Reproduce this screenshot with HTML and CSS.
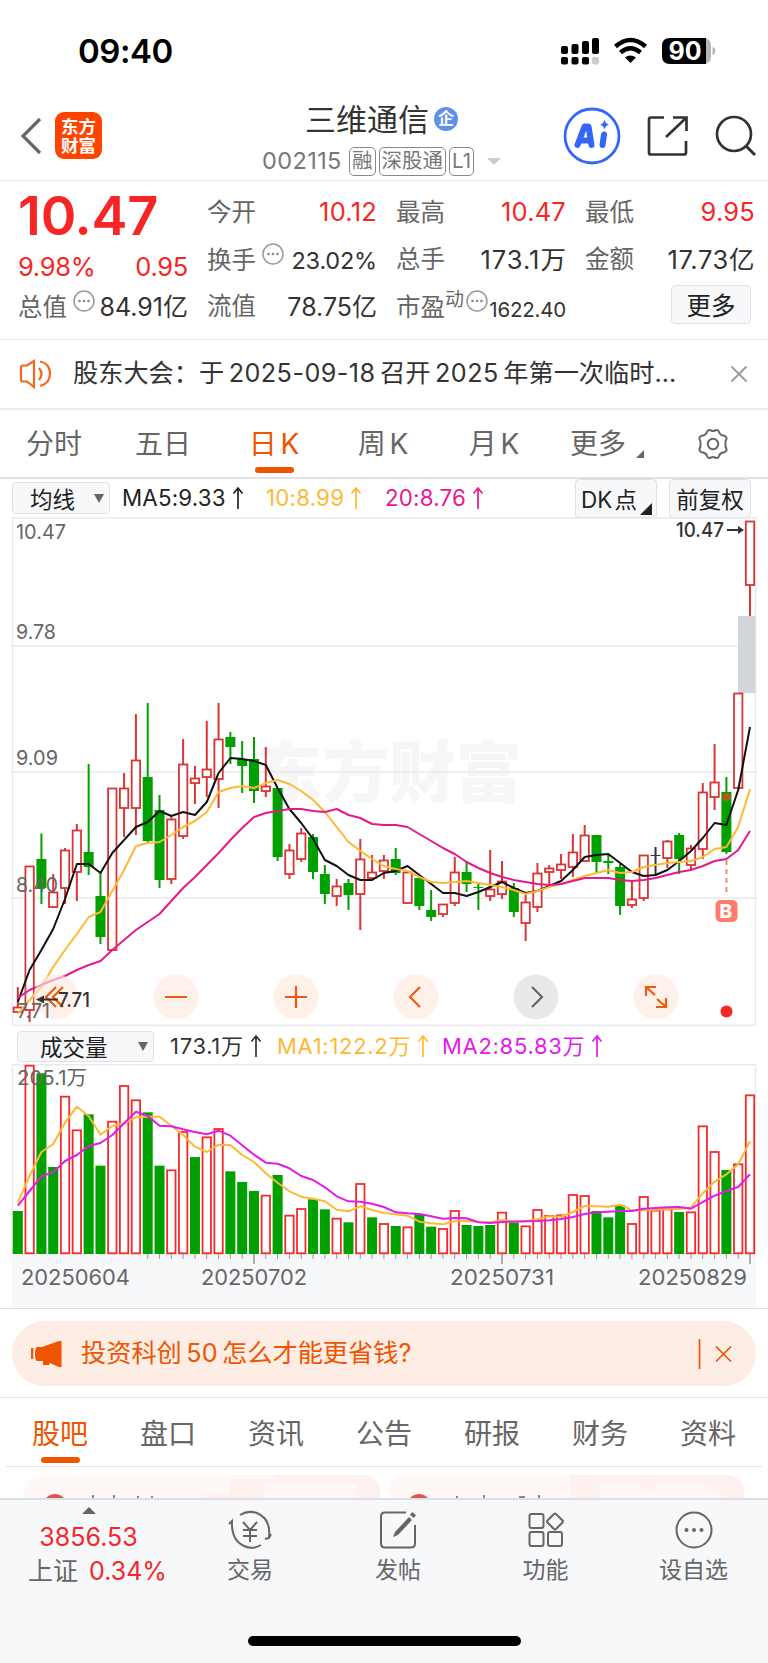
FILE: index.html
```html
<!DOCTYPE html>
<html lang="zh-CN">
<head>
    <meta charset="UTF-8">
    <meta name="viewport" content="width=device-width, initial-scale=1.0">
    <title>三维通信 002115</title>
    <link rel="stylesheet" href="styles.css">
</head>
<body>
    <svg class="defs" width="0" height="0">
        <symbol id="up" viewBox="0 0 12 24"><path d="M6 23V2M1.500 7.500L6 2l4.500 5.500" fill="none" stroke="currentColor" stroke-width="1.700"/></symbol>
        <symbol id="dots" viewBox="0 0 22 22"><circle cx="11" cy="11" r="10" fill="none" stroke="#999" stroke-width="1.500"/><g fill="#888"><circle cx="6.500" cy="11" r="1.300"/><circle cx="11" cy="11" r="1.300"/><circle cx="15.500" cy="11" r="1.300"/></g></symbol>
    </svg>

    <div class="status">
        <span class="time">09:40</span>
        <svg width="156" height="30" viewBox="0 0 156 30">
            <g>
                <rect x="1" y="10" width="7" height="8" rx="2"/><rect x="11.500" y="8" width="7" height="10" rx="2"/><rect x="22" y="5" width="7" height="13" rx="2"/><rect x="32" y="2" width="7" height="16" rx="2"/>
                <rect x="1" y="21" width="7" height="7.500" rx="2"/><rect x="11.500" y="21" width="7" height="7.500" rx="2"/><rect x="22" y="21" width="7" height="7.500" rx="2"/><rect x="32" y="21" width="7" height="7.500" rx="2" fill="#ccc"/>
            </g>
            <path d="M55.500 10.500Q70.500-2.500 85.500 10.500M60.500 16.500Q70.500 8 80.500 16.500" fill="none" stroke="#000" stroke-width="4.500"/>
            <path d="M65 21.500Q70.500 17.500 76 21.500L70.500 27z"/>
            <path d="M110 2h33q8 0 8 8v10q0 8-8 8h-33z" fill="#b5b5b5"/><path d="M110 2h36v26h-36q-8 0-8-8V10q0-8 8-8z"/>
            <path d="M152.500 11q3 1 3 4t-3 4z" fill="#b5b5b5"/>
            <text x="125" y="24" class="bat">90</text>
        </svg>
    </div>

    <div class="header">
        <svg class="back" width="22" height="38" viewBox="0 0 22 38"><path d="M20 2L3 19l17 17" fill="none" stroke="#666" stroke-width="3.200"/></svg>
        <div class="logo">东方<br>财富</div>
        <div class="stock">
            <div class="name">三维通信<span class="qi">企</span></div>
            <div class="code"><span class="num">002115</span><i>融</i><i>深股通</i><i>L1</i><b class="tri"></b></div>
        </div>
        <div class="tools">
            <svg width="58" height="58" viewBox="0 0 58 58"><circle cx="29" cy="29" r="27" fill="#fff" stroke="#3566fb" stroke-width="2.800"/><path d="M14.500 38l7-18.500h4l3 18.500M18 33.500h9M41 27.500l-1.500 10.500" fill="none" stroke="#3566fb" stroke-width="6" stroke-linejoin="round" stroke-linecap="round"/><path d="M41.500 12.500q1 4.500 4.500 5-3.500 1-4.500 5-1-4-4.500-5 3.500-.5 4.500-5z" fill="#3566fb"/></svg>
            <svg width="42" height="42" viewBox="0 0 42 42"><path d="M17 2.500H4q-2 0-2 2v33q0 2 2 2h33q2 0 2-2V26M26 2.500h13.500V16M39 3L19 22" fill="none" stroke="#333" stroke-width="2.700"/></svg>
            <svg width="42" height="42" viewBox="0 0 42 42"><circle cx="19" cy="19" r="17" fill="none" stroke="#333" stroke-width="2.700"/><path d="M31 31l9 9" stroke="#333" stroke-width="3"/></svg>
        </div>
    </div>

    <div class="quote">
        <div class="price">10.47</div>
        <div class="cell r1 c2"><span>今开</span><em class="red">10.12</em></div>
        <div class="cell r1 c3"><span>最高</span><em class="red">10.47</em></div>
        <div class="cell r1 c4"><span>最低</span><em class="red">9.95</em></div>
        <div class="cell r2 c1 change"><em class="red">9.98%</em><em class="red">0.95</em></div>
        <div class="cell r2 c2"><span>换手<svg class="info"><use href="#dots"/></svg></span><em class="mid">23.02%</em></div>
        <div class="cell r2 c3"><span>总手</span><em class="wide">173.1万</em></div>
        <div class="cell r2 c4"><span>金额</span><em>17.73亿</em></div>
        <div class="cell r3 c1"><span>总值<svg class="info"><use href="#dots"/></svg></span><em class="cap">84.91亿</em></div>
        <div class="cell r3 c2"><span>流值</span><em class="cap">78.75亿</em></div>
        <div class="cell r3 c3"><span>市盈<sup>动</sup><svg class="info pe"><use href="#dots"/></svg></span><em class="small">1622.40</em></div>
        <button class="more">更多</button>
    </div>

    <div class="notice">
        <svg width="34" height="30" viewBox="0 0 34 30"><path d="M2 8.500q0-2 2-2h4L15 2v26L8 22.500H4q-2 0-2-2zM20 9q5 6 0 12M21 2.500q10 2 10 12t-10 12.500" fill="none" stroke="#f06a1a" stroke-width="2.200"/></svg>
        <p>股东大会：于<span> 2025-09-18 </span>召开<span> 2025 </span>年第一次临时...</p>
        <svg width="18" height="18" viewBox="0 0 18 18"><path d="M1.500 1.500l15 15M16.500 1.500l-15 15" stroke="#999" stroke-width="1.800"/></svg>
    </div>

    <div class="periods">
        <a>分时</a><a>五日</a><a class="on">日 K</a><a>周 K</a><a>月 K</a><a class="corner">更多</a>
        <a class="gear"><svg width="34" height="32" viewBox="0 0 34 32"><path d="M11 4Q12 1 15 2.500q2 1 4 0Q22 1 23 4q1 3 4 3.500 4 .5 3.500 3.500-1.500 2.500-1 5-.5 2.500 1 5 .5 3-3.500 3.500-3 .5-4 3.500-1 3-4 1.500-2-1-4 0Q12 31 11 28q-1-3-4-3.500-4-.5-3.500-3.500 1.500-2.500 1-5 .5-2.500-1-5Q3 8 7 7.500 10 7 11 4z" fill="none" stroke="#666" stroke-width="2"/><circle cx="17" cy="16" r="5.200" fill="none" stroke="#666" stroke-width="2"/></svg></a>
    </div>

    <div class="bar">
        <button class="pick">均线<b></b></button>
        <span class="ma5">MA5:9.33<svg><use href="#up"/></svg></span>
        <span class="ma10">10:8.99<svg><use href="#up"/></svg></span>
        <span class="ma20">20:8.76<svg><use href="#up"/></svg></span>
        <button class="dk">DK 点</button>
        <button class="fq">前复权</button>
    </div>
    <svg id="kline" class="kline" viewBox="0 517 768 509"></svg>

    <div class="bar vol">
        <button class="pick">成交量<b></b></button>
        <span class="v0">173.1万<svg><use href="#up"/></svg></span>
        <span class="v1">MA1:122.2万<svg><use href="#up"/></svg></span>
        <span class="v2">MA2:85.83万<svg><use href="#up"/></svg></span>
    </div>
    <svg id="volume" class="volume" viewBox="0 1064 768 244"></svg>

    <div class="promo">
        <div class="pill">
            <svg width="32" height="28" viewBox="0 0 32 28"><path d="M1 8v11" stroke="#ee5500" stroke-width="2.500"/><path d="M6 7h5L28 1h2.500v26H28l-9-4-1 2h-6v-4H6q-2-1-2-7t2-7z" fill="#ee5500"/></svg>
            <p>投资科创 50 怎么才能更省钱?</p>
            <svg width="36" height="32" viewBox="0 0 36 32"><path d="M2.500 1v30M19 8.500l15 15M34 8.500l-15 15" stroke="#ee5500" stroke-width="1.700"/></svg>
        </div>
    </div>

    <div class="sections">
        <a class="on">股吧</a><a>盘口</a><a>资讯</a><a>公告</a><a>研报</a><a>财务</a><a>资料</a>
    </div>

    <div class="cards">
        <svg class="card" viewBox="0 0 356 23"><path d="M178 18h28V4h45V0h105v23H178z" fill="#fff1ef"/><path d="M241 9h91v14h-91z" fill="#fff7f5"/><circle cx="31" cy="31" r="12" fill="#dd5550"/><path d="M69 20v3M90 20v3M114 21v2M128 21v2" stroke="#888" stroke-width="2"/></svg>
        <svg class="card" viewBox="0 0 356 23"><path d="M182 0h174v23H182z" fill="#fff1ef"/><path d="M213 7h33l14 9 18-8q40-5 60 15H213z" fill="#fff7f5"/><circle cx="31" cy="31" r="12" fill="#dd5550"/><path d="M69 21v2M96 20v3M131 22h6M151 20v3" stroke="#888" stroke-width="2"/></svg>
    </div>

    <div class="dock">
        <div class="index"><b></b><strong>3856.53</strong><p>上证 <em>0.34%</em></p></div>
        <div class="item">
            <svg width="44" height="40" viewBox="0 0 44 40"><g fill="none" stroke="#666" stroke-width="2"><path d="M12 5q8-5 17-2 14 6 12 24M33 35q-8 5-17 1Q3 30 4 11L1 14M37 29l4-1 2-4M15 12l7 8 7-8M22 20v12M15 20h14M15 26h14"/></g></svg>
            <span>交易</span>
        </div>
        <div class="item">
            <svg width="38" height="40" viewBox="0 0 38 40"><path d="M27 2.500H6q-4 0-4 4v27q0 4 4 4h26q4 0 4-4V15" fill="none" stroke="#666" stroke-width="2"/><path d="M30 7l3 3-14 15-5 2 2-5zM33 2l4 3-2 3-4-3z" fill="#666"/></svg>
            <span>发帖</span>
        </div>
        <div class="item">
            <svg width="36" height="36" viewBox="0 0 36 36"><g fill="none" stroke="#666" stroke-width="2"><rect x="1.500" y="2" width="14" height="14" rx="2"/><rect x="1.500" y="20" width="14" height="14" rx="2"/><rect x="20" y="20" width="14" height="14" rx="2"/><path d="M26 2q1-1 2 0l6.500 6.500q1 1 0 2L28 17q-1 1-2 0l-6.500-6.500q-1-1 0-2z"/></g></svg>
            <span>功能</span>
        </div>
        <div class="item">
            <svg width="38" height="38" viewBox="0 0 38 38"><circle cx="19" cy="19" r="17.500" fill="none" stroke="#666" stroke-width="2"/><g fill="#666"><circle cx="11.500" cy="19" r="2"/><circle cx="19" cy="19" r="2"/><circle cx="26.500" cy="19" r="2"/></g></svg>
            <span>设自选</span>
        </div>
        <div class="home"></div>
    </div>
    <script src="chart.js"></script>
</body>
</html>
```
FILE: styles.css
```css
* {
    box-sizing: border-box;
}
body {
    margin: 0;
    width: 768px;
    height: 1663px;
    overflow: hidden;
    background: #fff;
    color: #333;
    font-family: Inter, "Noto Sans CJK SC", sans-serif;
    font-size: 25px;
    line-height: 1;
}
p {
    margin: 0;
}
em, i {
    font-style: normal;
}
button {
    font-family: inherit;
    padding: 0;
    color: #222;
    background: #f7f8fa;
    border: 1.5px solid #dfe1e6;
    border-radius: 4px;
}
.defs {
    position: absolute;
}
.status {
    display: flex;
    justify-content: space-between;
    align-items: center;
    height: 100px;
    padding: 2px 52px 0 78px;
    color: #000;
}
.time {
    padding-top: 1px;
    font-size: 33px;
    font-weight: 600;
    letter-spacing: -0.5px;
}
.bat {
    font-size: 25px;
    font-weight: 700;
    fill: #fff;
    text-anchor: middle;
}

/* header */
.header {
    display: grid;
    grid-template-columns: 35px 143px 333px 1fr;
    height: 81px;
    padding-left: 20px;
    border-bottom: 1.5px solid #e8e8e8;
}
.back {
    margin-top: 17px;
}
.logo {
    width: 47px;
    height: 47px;
    margin-top: 12px;
    padding-top: 5px;
    border-radius: 9px;
    background: #ff4400;
    color: #fff;
    font-size: 17.500px;
    font-weight: 700;
    line-height: 19px;
    text-align: center;
}
.stock {
    padding-left: 64px;
}
.name {
    display: flex;
    align-items: center;
    height: 38px;
    padding-left: 43px;
    font-size: 31px;
}
.qi {
    width: 24px;
    height: 24px;
    margin-left: 5px;
    border-radius: 50%;
    background: #5f90ea;
    color: #fff;
    font-size: 16px;
    font-weight: 700;
    line-height: 23px;
    text-align: center;
}
.code {
    display: flex;
    align-items: center;
    height: 46px;
    color: #777;
    font-size: 23.500px;
}
.code .num {
    width: 87px;
    letter-spacing: 0.4px;
}
.code i {
    height: 29px;
    margin-right: 3px;
    padding: 0 2px;
    border: 1.5px solid #888;
    border-radius: 5px;
    font-size: 20.500px;
    line-height: 26px;
    white-space: nowrap;
}
.tri {
    margin-left: 10px;
    border: 7px solid transparent;
    border-top-color: #ccc;
    border-bottom: 0;
}
.tools {
    display: flex;
    align-items: center;
    gap: 26px;
    height: 72px;
    margin-left: 32px;
}

/* quote */
.quote {
    display: grid;
    grid-template-columns: repeat(4, 170px);
    column-gap: 19px;
    grid-template-rows: 48px 47px 47px;
    height: 159px;
    padding: 7px 0 0 18px;
    border-bottom: 1.5px solid #e5e5e5;
}
.price {
    grid-area: 1 / 1;
    padding-top: 1px;
    color: #f72626;
    font-size: 54px;
    font-weight: 600;
    letter-spacing: -0.2px;
}
.cell {
    display: flex;
    justify-content: space-between;
    align-items: center;
    white-space: nowrap;
}
.cell span {
    color: #666;
    font-size: 24.500px;
}
.cell em {
    font-size: 25.500px;
    letter-spacing: 0.6px;
}
.cell .red {
    color: #f72626;
    letter-spacing: 0.2px;
}
.cell .mid {
    font-size: 23.500px;
    padding-top: 2px;
    letter-spacing: -0.2px;
}
.cell .cap {
    font-size: 25px;
    padding-top: 2px;
    letter-spacing: 0;
}
.cell .wide {
    letter-spacing: 1px;
    margin-right: -1px;
}
.cell .small {
    font-size: 20.500px;
    padding-top: 7px;
    letter-spacing: -0.2px;
}
.c1 { grid-column: 1; }
.c2 { grid-column: 2; }
.c3 { grid-column: 3; }
.c4 { grid-column: 4; }
.r1 { grid-row: 1; }
.r2 { grid-row: 2; }
.r3 { grid-row: 3; }
.change {
    padding-top: 14px;
}
.change .red {
    letter-spacing: -0.3px;
}
.info {
    width: 22px;
    height: 22px;
    margin: -4px 0 0 6px;
    vertical-align: 4px;
}
.info.pe {
    margin-left: 2px;
}
sup {
    font-size: 19px;
    line-height: 0;
    vertical-align: 10px;
}
.more {
    grid-area: 3 / 4;
    width: 80px;
    height: 39px;
    margin: -4px 0 0 86px;
    align-self: center;
    font-size: 24.500px;
}

.notice {
    display: flex;
    align-items: center;
    height: 70px;
    padding: 0 20px 1px 19px;
    border-bottom: 2px solid #ebebeb;
}
.notice p {
    flex: 1;
    margin-left: 20px;
    font-size: 25.200px;
    white-space: nowrap;
}
.notice p span {
    letter-spacing: 0.45px;
    word-spacing: -3px;
}

/* period tabs */
.periods {
    display: grid;
    grid-template-columns: 108px 110px 112px 106px 116px 92px 124px;
    height: 69px;
    padding-top: 1px;
    border-bottom: 2px solid #e0e1e6;
    word-spacing: -4px;
}
.periods a, .sections a {
    position: relative;
    display: flex;
    justify-content: center;
    align-items: center;
    color: #666;
    font-size: 28px;
}
.periods .gear {
    padding-left: 14px;
}
.periods .on, .sections .on {
    color: #ee5500;
}
.on::after {
    content: "";
    position: absolute;
    bottom: 4px;
    width: 39px;
    height: 6px;
    border-radius: 3px;
    background: #ee5500;
}
.corner::after, .dk::after {
    content: "";
    position: absolute;
    right: 0;
    bottom: 19px;
    border: 4px solid #666;
    border-top-color: transparent;
    border-left-color: transparent;
}

/* indicator rows */
.bar {
    display: flex;
    align-items: center;
    height: 38px;
    padding-left: 12px;
    font-size: 22.300px;
    letter-spacing: 0.2px;
}
.bar button {
    font-size: 22.500px;
}
.bar span {
    display: flex;
    align-items: center;
    white-space: nowrap;
}
.bar svg {
    width: 12px;
    height: 24px;
    margin-left: 6px;
}
.pick {
    display: flex;
    justify-content: space-between;
    align-items: center;
    width: 98px;
    height: 32px;
    margin-right: 12px;
    padding: 0 5px 0 17px;
}
.pick b {
    border: 5px solid transparent;
    border-top: 9px solid #666;
    border-bottom: 0;
}
.ma5 { width: 144px; color: #222; }
.ma10 { width: 119px; color: #fdb933; }
.ma20 { width: 190px; color: #e8168f; }
.bar .dk {
    position: relative;
    width: 82px;
    height: 39px;
    padding-right: 14px;
    word-spacing: -4px;
}
.dk::after {
    right: 4px;
    bottom: 2px;
    border: 6px solid #222;
    border-top-color: transparent;
    border-left-color: transparent;
}
.bar .fq {
    width: 82px;
    height: 39px;
    margin-left: 12px;
}
.kline, .volume {
    display: block;
    width: 768px;
    height: 509px;
}
.volume {
    height: 245px;
    border-bottom: 1px solid #e0e0e4;
}
.vol {
    padding: 2px 0 0 17px;
    font-size: 22px;
    letter-spacing: 0.7px;
}
.vol .pick {
    width: 137px;
    height: 31px;
    margin-right: 16px;
    padding-left: 22px;
}
.v0 { width: 107px; }
.v1 { width: 165px; color: #fdb933; }
.v2 { color: #e21ce8; }

.label {
    font-size: 20px;
    fill: #666;
}
.date {
    font-size: 21.500px;
    fill: #666;
}
.mark {
    font-size: 20px;
    font-weight: 500;
    fill: #333;
}
.water {
    font-size: 67px;
    font-weight: 900;
    fill: #f6f6f6;
}
.badge {
    font-size: 19px;
    font-weight: 800;
    fill: #fff;
}

/* promo */
.promo {
    height: 89px;
    padding: 12px 12px 0;
    border-bottom: 1.5px solid #e5e5e5;
}
.pill {
    display: flex;
    align-items: center;
    height: 65px;
    padding: 0 23px 0 19px;
    border-radius: 33px;
    background: #fdede4;
    color: #ee5500;
}
.pill p {
    flex: 1;
    margin-left: 18px;
    padding-top: 1px;
    font-size: 25.200px;
    word-spacing: -2.5px;
}
.sections {
    display: grid;
    grid-template-columns: repeat(7, 108px);
    height: 69px;
    margin: 0 6px;
    padding-top: 3px;
    border-bottom: 1.5px solid #e5e5e5;
}
.sections .on::after {
    bottom: 3px;
}
.cards {
    display: flex;
    gap: 8px;
    height: 31px;
    padding: 8px 24px 0;
}
.card {
    width: 356px;
    height: 23px;
    border-radius: 16px 16px 0 0;
    background: #fff8f6;
}

/* bottom bar */
.dock {
    position: relative;
    display: grid;
    grid-template-columns: 176px 148px 148px 147px 149px;
    height: 165px;
    border-top: 2px solid #dddfe5;
    background: #f7f8fa;
    color: #666;
}
.index {
    display: flex;
    flex-direction: column;
    align-items: center;
    padding: 7px 0 0 1px;
}
.index b {
    border: 7px solid transparent;
    border-top: 0;
    border-bottom-color: #666;
}
.index strong {
    margin-top: 11px;
    color: #f72626;
    font-size: 25px;
    font-weight: 400;
}
.index p {
    margin: 9px 0 0 18px;
    font-size: 25px;
    white-space: nowrap;
}
.index em {
    color: #f72626;
    margin-left: 4px;
}
.item {
    display: flex;
    flex-direction: column;
    align-items: center;
    padding-top: 10px;
}
.item svg {
    height: 40px;
}
.item span {
    margin-top: 9px;
    font-size: 23px;
}
.home {
    position: absolute;
    left: 248px;
    bottom: 17px;
    width: 273px;
    height: 10px;
    border-radius: 5px;
    background: #000;
}
```
FILE: chart.js
```js
const X0 = 17.8, STEP = 11.81;
const cx = i => X0 + STEP * i;

// colour, high, body top, body bottom, low
const candles = [
    ['r',987,1007,1012,1013],['r',866,866,1010,1022],['g',833.5,859,888,904],['r',874,892,907,907],
    ['r',848,850,888,904],['r',824,830,872,901],['g',764,852,867,875],['g',871,896,937,944],
    ['r',788,788,950,950],['r',773,788,808,837],['r',714,760,808,835],['g',703,777,841,842],
    ['g',795,810,880,888],['r',817,819,879,884],['r',739,764,836,839],['r',766,778,783,804],
    ['r',721,769,777,797],['r',703,739,779,808],['g',732,737,747,764],['g',741,759,766,793],
    ['g',737,759,791,803],['r',747,786,791,797],['g',788,788,857,861],['r',844,850,874,879],
    ['r',828,833,859,862],['g',834,837,872,879],['g',865,874,894,904],['r',879,886,896,906],
    ['g',879,883,895,910],['r',839,859,894,930],['r',855,872,878,880],['r',855,860,871,879],
    ['g',848,859,873,875],['r',871,872,903,903],['g',877,878,906,910],['g',890,910,917,921],
    ['r',904,904,914,917],['r',857,872,903,906],['g',862,872,884,892],['g',883,887,888,910],
    ['r',850,889,896,901],['r',861,881,894,899],['g',883,888,912,917],['r',895,902,923,941],
    ['r',863,873,907,912],['r',865,868,872,885],['r',854,864,870,879],['r',834,852,867,877],
    ['r',825,835,861,861],['g',835,835,862,873],['g',855,861,863,874],['g',864,867,906,915],
    ['r',882,899,905,908],['r',855,855,898,901],['k',847,855,856,875],['r',840,841,858,868],
    ['g',833,835,859,874],['r',845,848,865,870],['r',783,792,849,859],['r',744,782,797,810],
    ['g',777,792,852,854],['r',693,693,788,788],['r',521,521,585,616]
];
const ma5 = [1002,970,950,929,899,864,864,873,853,840,827,822,811,816,812,815,802,773,758,759,761,765,788,809,823,839,860,866,875,880,880,873,871,866,875,884,893,893,896,892,887,882,888,893,891,886,881,870,857,855,854,863,872,876,875,870,861,851,838,823,825,790,727];
const ma10 = [1014,1000,987,967,950,934,917,912,891,870,846,843,842,835,827,821,812,792,788,786,788,783,780,784,791,800,812,827,842,851,859,866,869,871,877,882,883,882,881,883,885,887,890,894,891,887,884,880,876,873,870,873,872,867,865,863,862,861,857,849,847,827,789];
const ma20 = [998,990,985,980,976,970,965,961,950,940,930,922,914,901,888,877,865,853,840,828,817,813,811,809,809,811,812,809,815,818,824,825,825,827,834,841,848,854,862,868,873,877,880,882,884,885,884,881,878,878,878,880,881,880,878,875,872,870,866,861,859,850,831];

// volume series, in thirds of a pixel from y = 1020
const vols = [573,137,160,441,230,331,283,437,305,198,241,277,437,451,336,411,352,327,454,486,513,527,465,587,567,538,568,596,607,492,592,612,618,622,582,620,627,573,615,618,615,578,608,619,570,588,586,525,528,573,592,556,612,531,572,568,576,577,319,396,450,433,226];
const volColors = 'grggrrggrrrggrrgrrgggrgrrggrgrgrgrggrrgggrgrrrrrrgggrrrrgrrrgrr';
const vma1 = [548,467,396,372,308,260,289,344,318,310,292,290,290,317,345,380,396,374,375,405,426,460,488,514,530,536,544,569,574,559,570,579,583,587,605,610,613,604,602,606,607,600,604,604,598,589,590,576,558,559,560,554,571,571,569,568,567,562,520,485,463,433,364];
const vma2 = [557,513,469,457,423,405,378,369,345,310,275,288,317,319,328,336,343,332,347,376,404,428,431,445,468,480,502,529,544,545,551,561,577,580,582,589,596,594,595,607,609,606,605,604,603,601,597,591,582,577,575,573,573,566,564,562,561,566,546,527,513,501,463];
const vy = v => 1020 + v / 3;

const colors = { r: '#d93535', g: '#00a000', k: '#333' };
const line = (pts, color) => `<polyline points="${pts.map((y, i) => cx(i).toFixed(1) + ',' + y.toFixed(1)).join(' ')}" fill="none" stroke="${color}" stroke-width="2" stroke-linejoin="round"/>`;
const text = (cls, x, y, len, str) => `<text class="${cls}" x="${x}" y="${y}" textLength="${len}" lengthAdjust="spacingAndGlyphs">${str}</text>`;

function drawKline() {
    let s = text('water', 256, 797, 266, '东方财富');
    s += '<path d="M12.500 518H755.500V1025.300H12.500zM12 646H755M12 772H755M12 898H755" fill="none" stroke="#e6eaf0" stroke-width="1.500"/>';
    s += '<rect x="738" y="616" width="17.500" height="77" fill="#d3d6db"/>';
    candles.forEach(([c, high, top, bottom, low], i) => {
        const x = cx(i), col = colors[c];
        s += `<path d="M${x} ${high}V${top}M${x} ${bottom}V${low}" stroke="${col}" stroke-width="2"/>`;
        if (c === 'r') {
            s += `<rect x="${x - 4.2}" y="${top + 0.5}" width="8.4" height="${Math.max(bottom - top - 0.5, 2)}" fill="#fff" stroke="${col}" stroke-width="1.8"/>`;
        } else {
            s += `<rect x="${x - 5}" y="${top}" width="10" height="${bottom - top}" fill="${col}"/>`;
        }
    });
    s += '<circle cx="726.500" cy="797" r="4" fill="#b5591c"/>';
    s += line(ma5, '#111') + line(ma10, '#fdb933') + line(ma20, '#e21a8e');
    s += text('mark', 676, 537, 48, '10.47') + '<path d="M727 530h12" stroke="#333" stroke-width="2"/><path d="M738 526l6 4-6 4z" fill="#333"/>';
    s += '<path d="M726.500 860v36" stroke="#ff7b6b" stroke-width="1.800" stroke-dasharray="5 4"/><rect x="715.500" y="900" width="22" height="22" rx="5" fill="#ff7b6b"/><text class="badge" x="719.500" y="918">B</text>';
    s += '<circle cx="726.500" cy="1011.500" r="6" fill="#f72626"/>';

    // round control buttons
    [56, 176, 296, 416, 536, 656].forEach((x, i) => {
        s += `<circle cx="${x}" cy="997" r="22.5" fill="${i === 4 ? '#e5e5e5' : '#ffe8dd'}" fill-opacity="${i === 4 ? 0.85 : 0.65}"/>`;
    });
    s += text('label', 16, 539, 50, '10.47') + text('label', 16, 639, 40, '9.78') + text('label', 16, 765, 42, '9.09') + text('label', 16, 892, 42, '8.40') + text('label', 17, 1018, 33, '7.71');
    s += '<g fill="none" stroke="#ee5a12" stroke-width="2.200"><path d="M56 987l-10 10 10 10M63 987l-10 10 10 10M165 997h22M285 997h22M296 986v22M420 987l-10 10 10 10"/><path d="M655 995l-9-8M646 996v-9h10M657 999l9 8M666 998v9h-10"/><path d="M532 987l10 10-10 10" stroke="#666"/></g>';
    s += '<path d="M43 999.500h15" stroke="#333" stroke-width="2"/><path d="M44 995.500l-8 4 8 4z" fill="#333"/>' + text('mark', 58, 1007, 32, '7.71');
    document.getElementById('kline').innerHTML = s;
}

function drawVolume() {
    let s = '<path d="M12 1254H756V1309H12z" fill="#f7f8fa"/><path d="M12.500 1254V1064.700H755.500V1254" fill="none" stroke="#e6eaf0" stroke-width="1.500"/>';
    vols.forEach((v, i) => {
        const x = cx(i), y = vy(v);
        if (volColors[i] === 'r') {
            s += `<rect x="${x - 4.2}" y="${y}" width="8.4" height="${1253.3 - y}" fill="#fff" stroke="#f52b2b" stroke-width="1.8"/>`;
        } else {
            s += `<rect x="${x - 5}" y="${y}" width="10" height="${1254 - y}" fill="#00a000"/>`;
        }
        if (i > 10) {
            const major = i === 20 || i === 41 || i === 62;
            s += `<path d="M${x} 1254v${major ? 10 : 5}" stroke="#999" stroke-width="${major ? 1.6 : 1}"/>`;
        }
    });
    s += text('label', 17, 1084.5, 70, '205.1万');
    s += line(vma1.map(vy), '#fdb933') + line(vma2.map(vy), '#e21ce8');
    s += text('date', 21, 1285, 109, '20250604') + text('date', 201, 1285, 106, '20250702') + text('date', 450, 1285, 104, '20250731') + text('date', 638, 1285, 109, '20250829');
    document.getElementById('volume').innerHTML = s;
}

drawKline();
drawVolume();
```
